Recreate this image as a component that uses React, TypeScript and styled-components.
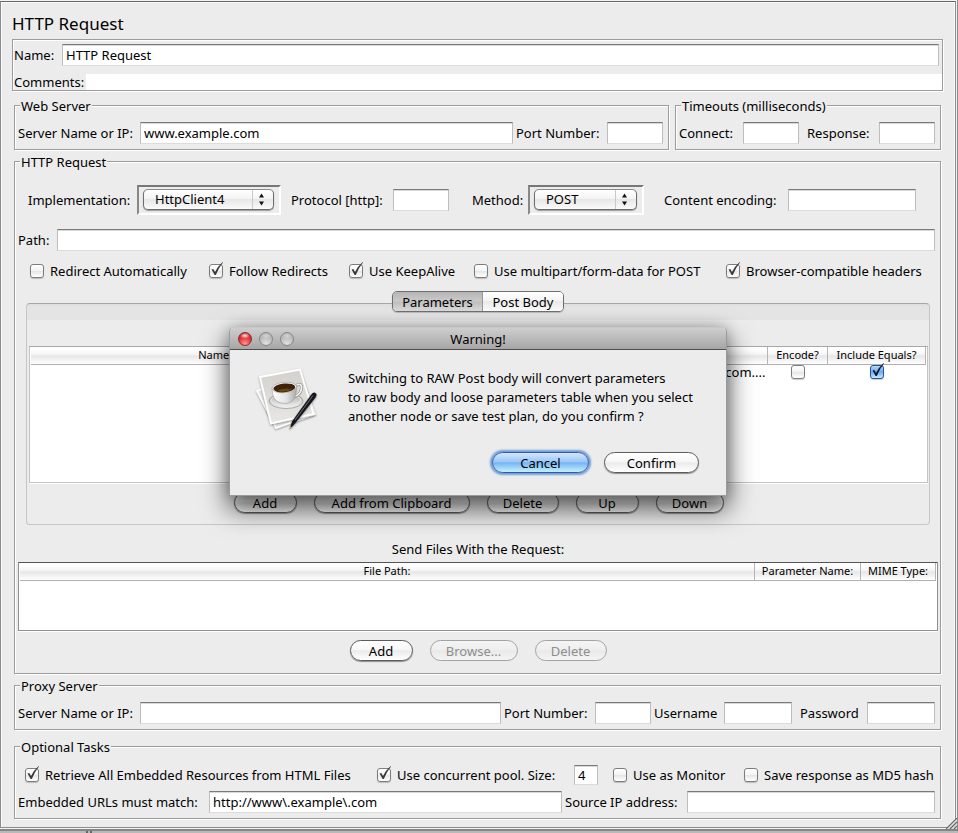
import React, { useId } from "react";
import styled, { createGlobalStyle, css } from "styled-components";

const font = `"Noto Sans", "Open Sans", sans-serif`;
const panelGrey = "#ececec";

const GlobalStyle = createGlobalStyle`
  *, *::before, *::after { box-sizing: border-box; }
  body {
    margin: 0;
    background: #b9b9b9;
    color: #000;
    font: 13px/18px ${font};
  }
  input, select, button { font: inherit; color: inherit; margin: 0; }
`;

const etched = css`
  border: 1px solid #9c9c9c;
  box-shadow: inset 1px 1px 0 #fff, 1px 1px 0 #fff;
`;

/* ---------- window ---------- */

const Desk = styled.div`
  position: relative;
  padding: 1px 1px 1px 0;
  background: #f4f4f4;
  border-right: 1px solid #8a8a8a;
  border-bottom: 2px solid #858585;
`;

const Frame = styled.main`
  background: ${panelGrey};
  border: 1px solid #8c8c8c;
  border-top-color: #666;
  box-shadow: inset 1px 1px 0 #fafafa, inset -1px 0 0 #fafafa;
  padding: 7px 12px 8px 11px;
`;

const Splitter = styled.div`
  height: 2px;
  background: linear-gradient(90deg, transparent 86px, #666 86px, #666 88px, transparent 88px, transparent 90px, #666 90px, #666 92px, transparent 92px);
`;

const Grip = styled.svg`
  position: absolute;
  right: 0;
  bottom: 0;
`;

const Title = styled.h1`
  margin: 0;
  font-size: 17px;
  font-weight: 400;
  line-height: 30px;
`;

const NameBox = styled.div`
  ${etched}
  padding: 4px 0 0 1px;
`;

const Row = styled.div<{ $gap?: number; $top?: number; $pad?: number }>`
  display: flex;
  align-items: center;
  gap: ${(p) => p.$gap ?? 0}px;
  margin-top: ${(p) => p.$top ?? 0}px;
  padding-left: ${(p) => p.$pad ?? 0}px;
`;

const SpacerCell = styled.span<{ $w?: number }>`
  flex: 0 0 ${(p) => p.$w ?? 3}px;
`;

const Group = styled.fieldset<{ $top: number; $inner?: number; $bottom?: number }>`
  ${etched}
  min-width: 0;
  margin: ${(p) => p.$top}px 2px 0;
  padding: ${(p) => p.$inner ?? 9}px 5px ${(p) => p.$bottom ?? 5}px 3px;
`;

const Legend = styled.legend`
  margin-left: 2px;
  padding: 1px 1px 0;
  line-height: 14px;
  background: ${panelGrey};
`;

const Columns = styled.div`
  display: grid;
  grid-template-columns: minmax(0, 1fr) 270px;
  gap: 2px;
`;

/* ---------- fields ---------- */

const FieldWrap = styled.div<{ $w?: number }>`
  display: flex;
  align-items: center;
  flex: ${(p) => (p.$w ? `0 0 ${p.$w}px` : "1 1 0")};
  min-width: 0;
`;

const Label = styled.label<{ $w: number }>`
  flex: 0 0 ${(p) => p.$w}px;
  line-height: 16px;
  white-space: nowrap;
`;

const TextBox = styled.input<{ $short?: boolean }>`
  flex: 1 1 0;
  min-width: 0;
  width: 100%;
  height: ${(p) => (p.$short ? 20 : 22)}px;
  padding: 0 3px;
  background: #fff;
  border: 1px solid #bdbdbd;
  border-top-color: #7a7a7a;
  border-bottom-color: #dcdcdc;
  border-radius: 0;
  box-shadow: inset 0 1px 0 #d8d8d8;
  outline: none;
`;

const PlainBox = styled.input`
  flex: 1 1 0;
  height: 16px;
  padding: 0 3px;
  border: 0;
  background: #fff;
  outline: none;
`;

const SizeCell = styled.div`
  width: 24px;
  display: flex;
`;

const SelectWell = styled.div`
  flex: 1 1 0;
  height: 30px;
  padding: 2px 5px 3px 4px;
  border: 2px solid #fff;
  border-top-color: #777;
  border-left-color: #888;
`;

const SelectFace = styled.div`
  display: grid;
  align-items: center;
  border: 1px solid #6d6d6d;
  border-top-color: #8c8c8c;
  border-radius: 5px;
  background: linear-gradient(#fff, #f4f4f4 45%, #e7e7e7 50%, #fafafa);
  box-shadow: 0 1px 1px rgba(0, 0, 0, 0.35);
  > * { grid-area: 1 / 1; }
`;

const Select = styled.select`
  appearance: none;
  width: 100%;
  height: 19px;
  padding: 0 24px 2px 11px;
  border: 0;
  background: none;
  outline: none;
`;

const Arrows = styled.svg`
  justify-self: end;
  pointer-events: none;
`;

const CheckLabel = styled.label`
  display: flex;
  align-items: center;
  gap: 6px;
  white-space: nowrap;
`;

const CheckCell = styled.span`
  display: grid;
  width: 14px;
  height: 14px;
  > * { grid-area: 1 / 1; }
  > svg { overflow: visible; pointer-events: none; }
`;

const CheckInput = styled.input<{ $blue?: boolean }>`
  appearance: none;
  width: 14px;
  height: 14px;
  border: 1px solid ${(p) => (p.$blue ? "#2c4f9e" : "#7d7d7d")};
  border-radius: 3px;
  background: ${(p) =>
    p.$blue
      ? "linear-gradient(#b5d6fa, #69aaf0 50%, #c2ecff)"
      : "linear-gradient(#fff, #f3f3f3 48%, #e6e6e6 52%, #fff)"};
  box-shadow: 0 1px 1px rgba(0, 0, 0, 0.2);
`;

const CheckGrid = styled.div`
  display: grid;
  grid-template-columns: 179fr 140fr 125fr 252fr 209fr;
  height: 18px;
  margin: 11px 0;
  padding-left: 12px;
`;

const TaskRow = styled.div`
  display: grid;
  grid-template-columns: 352px 197px 39px 131px 1fr;
  align-items: center;
  height: 20px;
  padding-left: 7px;
`;

/* ---------- buttons, tabs, tables ---------- */

const PushButton = styled.button<{ $w: number; $glow?: boolean }>`
  width: ${(p) => p.$w}px;
  height: 21px;
  padding: 0;
  line-height: 18px;
  border: 1px solid #5c5c5c;
  border-radius: 11px;
  background: linear-gradient(#fff, #f7f7f7 45%, #ebebeb 52%, #fff);
  box-shadow: 0 1px 1px rgba(0, 0, 0, 0.4);
  white-space: nowrap;

  &:disabled {
    color: #8e8e8e;
    border-color: #a3a3a3;
    background: linear-gradient(#f4f4f4, #efefef 45%, #e9e9e9 52%, #f4f4f4);
    box-shadow: none;
  }

  ${(p) =>
    p.$glow &&
    css`
      border-color: #3a55a8;
      background: linear-gradient(#d3e6fb, #9cc8f7 45%, #77b5f3 52%, #c4f1ff);
      box-shadow: 0 0 2px 2px #6b9fd8;
    `}
`;

const ButtonBar = styled.div<{ $top: number }>`
  display: flex;
  justify-content: center;
  gap: 17px;
  margin-top: ${(p) => p.$top}px;
`;

const TabArea = styled.div`
  margin: 0 5px 0 8px;
`;

const Tabs = styled.div`
  position: relative;
  display: flex;
  width: 172px;
  height: 21px;
  margin: 0 auto -9px;
  border: 1px solid #6f6f6f;
  border-radius: 5px;
  overflow: hidden;
  box-shadow: 0 1px 1px rgba(0, 0, 0, 0.2);
`;

const Tab = styled.button<{ $on?: boolean }>`
  flex: ${(p) => (p.$on ? "0 0 90px" : "1 1 0")};
  padding: 0;
  line-height: 18px;
  border: 0;
  border-right: ${(p) => (p.$on ? "1px solid #999" : "0")};
  background: ${(p) =>
    p.$on
      ? "linear-gradient(#b4b4b4, #c9c9c9 45%, #bfbfbf 55%, #dadada)"
      : "linear-gradient(#fff, #f4f4f4 45%, #e9e9e9 50%, #fbfbfb)"};
`;

const TabPanel = styled.section`
  padding: 42px 1px 11px 2px;
  border: 1px solid #c6c6c6;
  border-top-color: #a6a6a6;
  border-radius: 4px;
  background: linear-gradient(#dedede, #e4e4e4 3px, #e4e4e4 16px, ${panelGrey} 16px);
`;

const TableWell = styled.div<{ $h: number; $dark?: boolean }>`
  min-height: ${(p) => p.$h}px;
  padding: 0 1px;
  background: #fff;
  border: 1px solid ${(p) => (p.$dark ? "#8f8f8f" : "#c4c4c4")};
  border-top-color: ${(p) => (p.$dark ? "#555" : "#a8a8a8")};
  box-shadow: 0 1px 0 #fff;
`;

const Table = styled.table`
  width: 100%;
  table-layout: fixed;
  border-collapse: collapse;

  th {
    height: 17px;
    padding: 0;
    font-size: 11px;
    line-height: 16px;
    font-weight: 400;
    white-space: nowrap;
    border-right: 1px solid #b5b5b5;
    border-bottom: 1px solid #b0b0b0;
    background: linear-gradient(#fff 15%, #f4f4f4 45%, #e6e6e6 52%, #fff);
  }
  th.open { border-right: 0; }
  td { height: 16px; padding: 0; line-height: 14px; vertical-align: top; }
  td.value { text-align: right; padding-right: 2px; }
  td span { margin: 0 auto; }
`;

const Caption = styled.h2`
  margin: 15px 0 4px;
  font-size: 13px;
  font-weight: 400;
  line-height: 18px;
  text-align: center;
`;

const FilesArea = styled.section`
  margin-right: -3px;
`;

/* ---------- dialog ---------- */

const Sheet = styled.dialog`
  position: absolute;
  top: 327px;
  left: 0;
  right: 2px;
  width: 498px;
  margin: 0 auto;
  padding: 0;
  color: #000;
  border: 1px solid #9a9a9a;
  border-top-color: #c8c8c8;
  border-radius: 5px 5px 0 0;
  background: ${panelGrey};
  box-shadow: 0 12px 26px 2px rgba(0, 0, 0, 0.6), 0 0 14px rgba(0, 0, 0, 0.2);
`;

const TitleBar = styled.header`
  position: relative;
  height: 22px;
  line-height: 22px;
  text-align: center;
  border-bottom: 1px solid #4e4e4e;
  border-radius: 4px 4px 0 0;
  background: linear-gradient(#cecece, #a6a6a6);
`;

const Lights = styled.div`
  position: absolute;
  left: 8px;
  top: 4px;
  display: flex;
  gap: 7px;
`;

const Light = styled.button<{ $red?: boolean }>`
  width: 14px;
  height: 14px;
  padding: 0;
  border: 1px solid ${(p) => (p.$red ? "#8b2a2a" : "#878787")};
  border-radius: 50%;
  background: ${(p) =>
    p.$red
      ? "radial-gradient(ellipse 5px 3px at 50% 22%, rgba(255, 255, 255, 0.9), transparent), radial-gradient(circle at 50% 90%, #ff9a90, #e5383b 50%, #b4141f)"
      : "radial-gradient(ellipse 5px 3px at 50% 22%, rgba(255, 255, 255, 0.4), transparent), radial-gradient(circle at 50% 90%, #e2e2e2, #bababa 60%, #a9a9a9)"};
`;

const SheetBody = styled.div`
  display: grid;
  grid-template-columns: 94px 1fr;
  padding: 17px 0 0 24px;
`;

const Message = styled.p`
  margin: 2px 0 0;
  line-height: 19px;
  white-space: nowrap;
`;

const SheetButtons = styled.div`
  display: flex;
  justify-content: flex-end;
  gap: 15px;
  padding: 19px 27px 22px 0;
`;

/* ---------- parts ---------- */

function Field({ label, lw, w, value }: { label: string; lw: number; w?: number; value?: string }) {
  const id = useId();
  return (
    <FieldWrap $w={w}>
      <Label htmlFor={id} $w={lw}>{label}</Label>
      <TextBox id={id} defaultValue={value} />
    </FieldWrap>
  );
}

function SelectField({ label, lw, w, value }: { label: string; lw: number; w: number; value: string }) {
  const id = useId();
  return (
    <FieldWrap $w={w}>
      <Label htmlFor={id} $w={lw}>{label}</Label>
      <SelectWell>
        <SelectFace>
          <Select id={id} defaultValue={value}>
            <option>{value}</option>
          </Select>
          <Arrows width="22" height="19" viewBox="0 0 22 19" aria-hidden="true">
            <path d="M1.5 0v19" stroke="#c9c9c9" />
            <path d="M8 7.5L10.500 3.500L13 7.500zM8 11.500L10.500 15.500L13 11.500z" fill="#111" />
          </Arrows>
        </SelectFace>
      </SelectWell>
    </FieldWrap>
  );
}

function CheckBox({ checked, blue, name, id }: { checked?: boolean; blue?: boolean; name?: string; id?: string }) {
  return (
    <CheckCell>
      <CheckInput type="checkbox" id={id} defaultChecked={checked} $blue={blue} aria-label={name} />
      {checked && (
        <svg width="14" height="14" viewBox="0 0 14 14" aria-hidden="true">
          <path d="M2.600 5.400L4.300 5L6 8Q9 2 13.700 -2L14 -1.500Q9.500 4 6.800 11L5.600 11Z" fill={blue ? "#10182c" : "#3a3a3a"} />
        </svg>
      )}
    </CheckCell>
  );
}

function Check({ label, checked }: { label: string; checked?: boolean }) {
  const id = useId();
  return (
    <CheckLabel htmlFor={id}>
      <CheckBox id={id} checked={checked} />
      {label}
    </CheckLabel>
  );
}

function CoffeeIcon() {
  return (
    <svg width="68" height="66" viewBox="0 0 68 66" aria-hidden="true">
      <defs>
        <linearGradient id="paper" x1="0" y1="0" x2="0" y2="1">
          <stop offset="0" stopColor="#d2d1cd" />
          <stop offset="1" stopColor="#e8e7e4" />
        </linearGradient>
        <linearGradient id="cup" x1="0" y1="0" x2="1" y2="0">
          <stop offset="0" stopColor="#fff" />
          <stop offset="0.6" stopColor="#e2e2e2" />
          <stop offset="1" stopColor="#a9a9a9" />
        </linearGradient>
        <linearGradient id="saucer" x1="0" y1="0" x2="0" y2="1">
          <stop offset="0" stopColor="#b0b0b0" />
          <stop offset="1" stopColor="#f4f4f4" />
        </linearGradient>
        <filter id="soft" x="-20%" y="-20%" width="140%" height="140%">
          <feDropShadow dx="0" dy="1" stdDeviation="0.8" floodOpacity="0.4" />
        </filter>
      </defs>
      <path d="M3 24L47 9L61 47L22 61Z" fill="#e4e4e1" stroke="#fff" strokeWidth="1.500" filter="url(#soft)" />
      <path d="M6 10L46 2.500L59.500 47L17 56.500Z" fill="url(#paper)" stroke="#fff" strokeWidth="1.800" filter="url(#soft)" />
      <ellipse cx="32" cy="34" rx="17" ry="7.500" fill="url(#saucer)" stroke="#8f8f8f" strokeWidth="0.700" />
      <ellipse cx="32" cy="33" rx="15" ry="5.500" fill="none" stroke="#e9e9e9" strokeWidth="0.800" />
      <path d="M41 19Q48 15 47.500 21Q47 28 39 30" fill="none" stroke="#8c8c8c" strokeWidth="3" />
      <path d="M41 19Q48 15 47.500 21Q47 28 39 30" fill="none" stroke="#f1f1f1" strokeWidth="1.800" />
      <path d="M18 21Q18 34 27 36Q34 37.500 38.500 34Q43 29 42.500 18Z" fill="url(#cup)" stroke="#8f8f8f" strokeWidth="0.500" />
      <ellipse cx="30.300" cy="20.500" rx="12.300" ry="5.200" transform="rotate(-5 30.300 20.500)" fill="#f6f6f6" stroke="#9a9a9a" strokeWidth="0.600" />
      <ellipse cx="30.300" cy="20.900" rx="11" ry="4.400" transform="rotate(-5 30.300 20.900)" fill="#3d2409" />
      <path d="M24 23Q30 20.500 38 22Q33 25.500 25 24.500Z" fill="#6b4513" />
      <path d="M57 28Q59.500 24.500 61.500 26Q63.500 27 61.500 30.500L41 56.500L35.500 62.500L38 54.500Z" fill="#17181b" filter="url(#soft)" />
      <path d="M59 28.500L41 53" stroke="#6d7074" strokeWidth="1" />
      <path d="M35.300 62.800L36.600 59.200L38.200 60.400Z" fill="#c8a26a" />
    </svg>
  );
}

export default function App() {
  const comments = useId();
  return (
    <>
      <GlobalStyle />
      <Desk>
        <Frame>
          <Title>HTTP Request</Title>
          <NameBox>
            <Row>
              <Field label="Name:" lw={48} value="HTTP Request" />
              <SpacerCell />
            </Row>
            <Row $top={8}>
              <Label htmlFor={comments} $w={72}>Comments:</Label>
              <PlainBox id={comments} />
            </Row>
          </NameBox>

          <Columns>
            <Group $top={7}>
              <Legend>Web Server</Legend>
              <Row $gap={3}>
                <Field label="Server Name or IP:" lw={122} value="www.example.com" />
                <Field label="Port Number:" lw={91} w={147} />
              </Row>
            </Group>
            <Group $top={7}>
              <Legend>Timeouts (milliseconds)</Legend>
              <Row $gap={8}>
                <Field label="Connect:" lw={64} w={120} />
                <Field label="Response:" lw={72} w={128} />
              </Row>
            </Group>
          </Columns>

          <Group $top={4} $inner={16} $bottom={12}>
            <Legend>HTTP Request</Legend>
            <Row $pad={10}>
              <SelectField label="Implementation:" lw={109} w={253} value="HttpClient4" />
              <SpacerCell $w={10} />
              <Field label="Protocol [http]:" lw={102} w={158} />
              <SpacerCell $w={23} />
              <SelectField label="Method:" lw={56} w={172} value="POST" />
              <SpacerCell $w={20} />
              <Field label="Content encoding:" lw={124} w={252} />
            </Row>
            <Row $top={14}>
              <Field label="Path:" lw={39} />
            </Row>
            <CheckGrid>
              <Check label="Redirect Automatically" />
              <Check label="Follow Redirects" checked />
              <Check label="Use KeepAlive" checked />
              <Check label="Use multipart/form-data for POST" />
              <Check label="Browser-compatible headers" checked />
            </CheckGrid>

            <TabArea>
              <Tabs role="tablist">
                <Tab role="tab" aria-selected="true" $on>Parameters</Tab>
                <Tab role="tab" aria-selected="false">Post Body</Tab>
              </Tabs>
              <TabPanel>
                <TableWell $h={137}>
                  <Table>
                    <colgroup>
                      <col />
                      <col />
                      <col width="60" />
                      <col width="98" />
                    </colgroup>
                    <thead>
                      <tr>
                        <th className="open">Name:</th>
                        <th />
                        <th>Encode?</th>
                        <th>Include Equals?</th>
                      </tr>
                    </thead>
                    <tbody>
                      <tr>
                        <td />
                        <td className="value">com....</td>
                        <td><CheckBox name="Encode?" /></td>
                        <td><CheckBox name="Include Equals?" checked blue /></td>
                      </tr>
                    </tbody>
                  </Table>
                </TableWell>
                <ButtonBar $top={9}>
                  <PushButton $w={63}>Add</PushButton>
                  <PushButton $w={156}>Add from Clipboard</PushButton>
                  <PushButton $w={72}>Delete</PushButton>
                  <PushButton $w={63}>Up</PushButton>
                  <PushButton $w={68}>Down</PushButton>
                </ButtonBar>
              </TabPanel>
            </TabArea>

            <FilesArea>
              <Caption>Send Files With the Request:</Caption>
              <TableWell $h={69} $dark>
                <Table>
                  <colgroup>
                    <col />
                    <col width="106" />
                    <col width="75" />
                  </colgroup>
                  <thead>
                    <tr>
                      <th>File Path:</th>
                      <th>Parameter Name:</th>
                      <th>MIME Type:</th>
                    </tr>
                  </thead>
                </Table>
              </TableWell>
              <ButtonBar $top={9}>
                <PushButton $w={63}>Add</PushButton>
                <PushButton $w={88} disabled>Browse...</PushButton>
                <PushButton $w={72} disabled>Delete</PushButton>
              </ButtonBar>
            </FilesArea>
          </Group>

          <Group $top={4}>
            <Legend>Proxy Server</Legend>
            <Row $gap={3}>
              <Field label="Server Name or IP:" lw={122} />
              <Field label="Port Number:" lw={91} w={147} />
              <Field label="Username" lw={70} w={138} />
              <SpacerCell $w={2} />
              <Field label="Password" lw={67} w={135} />
            </Row>
          </Group>

          <Group $top={9} $inner={11}>
            <Legend>Optional Tasks</Legend>
            <TaskRow>
              <Check label="Retrieve All Embedded Resources from HTML Files" checked />
              <Check label="Use concurrent pool. Size:" checked />
              <SizeCell>
                <TextBox $short defaultValue="4" aria-label="Pool size" />
              </SizeCell>
              <Check label="Use as Monitor" />
              <Check label="Save response as MD5 hash" />
            </TaskRow>
            <Row $gap={3} $top={6}>
              <Field label="Embedded URLs must match:" lw={191} value="http://www\.example\.com" />
              <Field label="Source IP address:" lw={122} w={370} />
            </Row>
          </Group>
        </Frame>
        <Grip width="11" height="11" viewBox="0 0 11 11" aria-hidden="true">
          <path d="M0 11L11 0V11Z" fill="#ddd" />
          <path d="M0 11L11 0M4 11L11 4M8 11L11 8" stroke="#666" strokeWidth="1.200" />
        </Grip>
      </Desk>
      <Splitter />

      <Sheet open aria-labelledby="sheet-title">
        <TitleBar>
          <Lights>
            <Light $red aria-label="Close" />
            <Light disabled aria-label="Minimize" />
            <Light disabled aria-label="Zoom" />
          </Lights>
          <span id="sheet-title">Warning!</span>
        </TitleBar>
        <SheetBody>
          <CoffeeIcon />
          <Message>
            Switching to RAW Post body will convert parameters<br />
            to raw body and loose parameters table when you select<br />
            another node or save test plan, do you confirm ?
          </Message>
        </SheetBody>
        <SheetButtons>
          <PushButton $w={97} $glow>Cancel</PushButton>
          <PushButton $w={95}>Confirm</PushButton>
        </SheetButtons>
      </Sheet>
    </>
  );
}
